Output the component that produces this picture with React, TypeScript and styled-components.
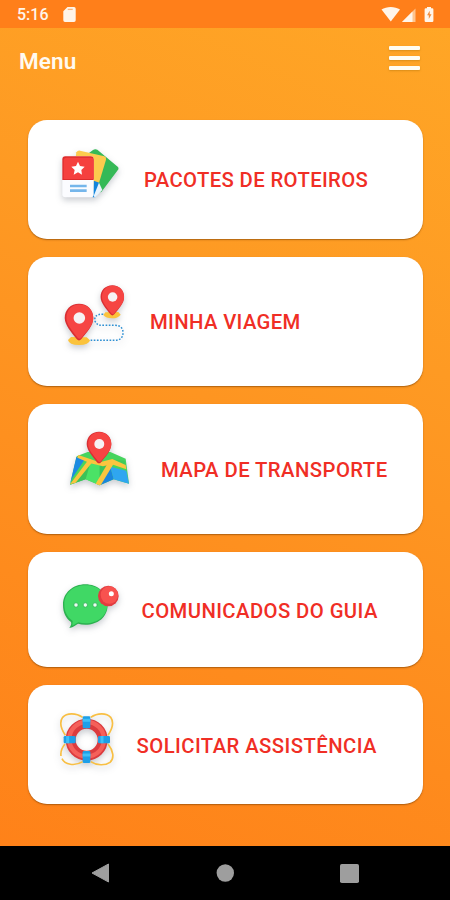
import React from "react";
import styled, { createGlobalStyle } from "styled-components";

const GlobalStyle = createGlobalStyle`
  * { box-sizing: border-box; }
  body { margin: 0; font-family: Roboto, "Liberation Sans", sans-serif; }
`;

const Screen = styled.div`
  width: 450px;
  height: 900px;
  display: flex;
  flex-direction: column;
  overflow: hidden;
  background: linear-gradient(205deg, #ffa726 0%, #fe9a23 34%, #fe8b1d 70%, #ff8018 100%);
`;

const StatusBar = styled.div`
  height: 28px;
  flex: none;
  display: flex;
  align-items: center;
  justify-content: space-between;
  padding: 1px 16px 0 17px;
  background: #ff7f1a;
  color: #fff5ea;
`;

const StatusGroup = styled.div`
  display: flex;
  align-items: center;
`;

const Clock = styled.span`
  width: 46px;
  padding-top: 1px;
  font-size: 16px;
  line-height: 20px;
  font-weight: 500;
`;

const Header = styled.header`
  height: 92px;
  flex: none;
  display: flex;
  align-items: flex-start;
  justify-content: space-between;
  padding: 17px 30px 0 19px;
`;

const Title = styled.h1`
  margin: 2px 0 0;
  font-size: 22.5px;
  line-height: 28px;
  font-weight: 600;
  letter-spacing: 0.1px;
  color: #fffaf0;
`;

const MenuButton = styled.button`
  width: 31px;
  margin: 0;
  padding: 1px 0 0;
  border: 0;
  background: none;
  display: flex;
  flex-direction: column;
  gap: 6px;
`;

const MenuBar = styled.span`
  height: 4px;
  border-radius: 1px;
  background: #fffdf2;
  box-shadow: 0 1px 2px rgba(150, 100, 0, 0.35);
`;

const CardList = styled.main`
  flex: 1;
  display: flex;
  flex-direction: column;
  gap: 18px;
  padding: 0 27px 0 28px;
`;

const Card = styled.div<{ $height: number; $inset: number }>`
  height: ${(p) => p.$height}px;
  flex: none;
  display: flex;
  align-items: center;
  padding-left: ${(p) => p.$inset}px;
  border-radius: 19px;
  background: #fff;
  box-shadow: 0 1px 1.5px rgba(120, 60, 0, 0.6);
`;

const IconSlot = styled.div<{ $gap: number; $lift: number }>`
  display: flex;
  flex: none;
  margin: 0 ${(p) => p.$gap}px ${(p) => p.$lift}px 0;
`;

const Label = styled.span<{ $spacing: number; $drop: number }>`
  padding-top: ${(p) => p.$drop}px;
  font-size: 20.3px;
  line-height: 24px;
  font-weight: 500;
  letter-spacing: ${(p) => p.$spacing}px;
  white-space: nowrap;
  color: #f02e25;
`;

const NavBar = styled.nav`
  height: 54px;
  flex: none;
  display: flex;
  align-items: center;
  justify-content: space-between;
  padding: 0 91px 0 91px;
  background: #000;
`;

const SoftSvg = styled.svg`
  overflow: visible;
  filter: drop-shadow(0 3px 3px rgba(40, 50, 70, 0.25));
`;

const SdCard = () => (
  <svg width="13" height="15" viewBox="0 0 13 15">
    <path d="M4.500 0H11a1.700 1.700 0 0 1 1.700 1.700v11.600A1.700 1.700 0 0 1 11 15H2a1.700 1.700 0 0 1-1.700-1.700V4.300z" fill="#fff5ea" />
    <path d="M4.700 2.400h5" stroke="#f9b47c" strokeWidth="1.300" />
  </svg>
);

const StatusIcons = () => (
  <svg width="53" height="17" viewBox="0 0 53 17">
    <path d="M.5 3.500C5.500 .1 14 .1 19 3.500L9.800 15.500z" fill="#fff5ea" />
    <path d="M34.500 2.500V16H21z" fill="#ffc48d" />
    <path d="M31.500 5.500V16H21z" fill="#fff5ea" />
    <path d="M46 1h4v1.300h1.200a1.200 1.200 0 0 1 1.200 1.200v11.300a1.200 1.200 0 0 1-1.200 1.200h-6.400a1.200 1.200 0 0 1-1.200-1.200V3.500a1.200 1.200 0 0 1 1.200-1.200H46z" fill="#fff5ea" />
    <path d="M48.700 4.800l-2.600 4.400h1.700v3.700l2.700-4.600h-1.800z" fill="#f28b3a" />
  </svg>
);

const PackagesIcon = () => (
  <SoftSvg width="80" height="70" viewBox="0 0 240 210">
    <path d="M128 31q7-6 14-2l61 51q5 5 0 11l-49 65-38 8V40z" fill="#35b957" />
    <path d="M79 37q4-6 11-5l73 17q7 3 5 10l-24 80-24 22L76 60z" fill="#fccb4e" />
    <path d="M131 122l17 6-4 15 10 5-18 24h-8z" fill="#1385dc" />
    <path d="M147 128l10 22-22 23-4-5z" fill="#e8f3fc" />
    <rect x="37" y="49" width="94" height="123" rx="9" fill="#fbfcff" />
    <path d="M46 49h76q9 0 9 9v62H37V58q0-9 9-9z" fill="#dc2c2c" />
    <path d="M49 53h74q8 0 8 8v56H41V61q0-8 8-8z" fill="#f5403e" />
    <path d="M84 65l6 13 14 2-10 10 2 14-12-7-13 7 3-14-10-10 14-2z" fill="#fff" />
    <path d="M60 138h50M60 152h50" stroke="#75b6eb" strokeWidth="8" />
  </SoftSvg>
);

const Pin = ({ transform }: { transform: string }) => (
  <g transform={transform}>
    <path d="M0-42C-25-42-42-24-42 0c0 21 20 42 35 62q7 8 14 0C23 42 42 23 42 0 42-24 25-42 0-42z" fill="#d92f33" />
    <path d="M2-40C-22-40-37-23-37 0c0 20 18 38 33 58q6 6 11 0C22 40 42 22 42 0 42-23 25-40 2-40z" fill="#f64543" />
    <circle cx="1" cy="0" r="17" fill="#f6f2f4" />
  </g>
);

const TripIcon = () => (
  <SoftSvg width="85" height="80" viewBox="0 0 255 240">
    <path d="M160 118C139 116 132 126 135 138C141 153 153 151 166 151H194C212 151 219 160 219 173C219 188 210 196 196 196H122" fill="none" stroke="#2f90d3" strokeWidth="4.500" strokeDasharray="5 4.500" />
    <path d="M166 112l-6 8q8 10 26 10t26-11l-7-8z" fill="#fbc33c" />
    <Pin transform="translate(187 66) scale(.84)" />
    <path d="M63 186l-9 9q3 15 33 15t33-14l-10-9z" fill="#fbc33c" />
    <Pin transform="translate(87 129) scale(1.020)" />
  </SoftSvg>
);

const MapIcon = () => (
  <SoftSvg width="85" height="80" viewBox="0 0 255 240">
    <path d="M65 109l33-13h68l46 20 10 75-46-13-42 18-42-18-47 16z" fill="#46d45e" />
    <path d="M64 111l26 6-38 57-7 18z" fill="#1b8ae2" />
    <path d="M92 178l-47 16 6-10 52-62 2 26z" fill="#3cc258" />
    <path d="M92 178l14-50 28 8v60z" fill="#4be266" />
    <path d="M134 196v-12l30-52 12 46z" fill="#1b86dc" />
    <path d="M134 138l28-10-28 58z" fill="#3bc35a" />
    <path d="M176 178l-10-38 48 12 8 39z" fill="#2fa6f0" />
    <path d="M165 118l44 4 3 14-40-10z" fill="#3fca5a" />
    <path d="M70 105l42 14 22 8 38-10 40 18 2 13-44-15-26 6-38-9-39-17z" fill="#fbc53f" />
    <path d="M45 193l57-76 13 6-53 65z" fill="#fbc53f" />
    <path d="M122 191l38-64 15 6-37 61-5 2z" fill="#fbc53f" />
    <Pin transform="translate(132 72) scale(.88)" />
  </SoftSvg>
);

const MessageIcon = () => (
  <SoftSvg width="80" height="70" viewBox="0 0 240 210">
    <path d="M106 43c37 0 67 25 67 61 0 37-29 60-67 60-8 0-15-1-22-3-6 3-13 10-26 13 5-7 7-13 5-18-16-12-24-29-24-52 0-36 30-61 67-61z" fill="#2cb150" />
    <path d="M107 46c36 0 65 23 65 57s-28 57-65 57c-8 0-15-1-22-3l-18 10 1-14c-17-12-25-28-25-50 0-34 28-57 64-57z" fill="#40d865" />
    <g fill="#e9fdf0" stroke="#2ba650" strokeWidth="2">
      <circle cx="78" cy="105" r="6.500" />
      <circle cx="106" cy="105" r="6.500" />
      <circle cx="135" cy="105" r="6.500" />
    </g>
    <circle cx="175" cy="78" r="31" fill="#e23c40" />
    <circle cx="178" cy="75" r="26" fill="#f8524f" />
    <circle cx="184" cy="71" r="7.500" fill="#fff" />
  </SoftSvg>
);

const AssistanceIcon = () => (
  <SoftSvg width="75" height="80" viewBox="0 0 225 240">
    <path d="M98 52C78 38 50 38 38 52C28 66 34 88 46 106M122 52C142 38 170 38 182 52C192 66 186 88 174 106M45 132C35 144 31 154 33 168M36 176C44 194 74 200 98 185M174 132C190 152 194 174 180 187C166 197 140 197 122 185" fill="none" stroke="#f8bf43" strokeWidth="5" />
    <circle cx="110" cy="119" r="48" fill="none" stroke="#dc3b3e" strokeWidth="30" />
    <circle cx="110" cy="118" r="52" fill="none" stroke="#f5605a" strokeWidth="13" />
    <g fill="#1d9fe8">
      <rect x="98" y="49" width="23" height="36" rx="4" />
      <rect x="98" y="153" width="23" height="36" rx="4" />
      <rect x="41" y="108" width="36" height="22" rx="4" />
      <rect x="144" y="108" width="36" height="22" rx="4" />
    </g>
    <path d="M98 61h23M98 165h23M53 108v22M156 108v22" stroke="#3fc0f7" strokeWidth="9" />
  </SoftSvg>
);

const items = [
  { label: "PACOTES DE ROTEIROS", icon: <PackagesIcon />, height: 119, inset: 22, gap: 14, lift: 9, spacing: 0.37, drop: 1 },
  { label: "MINHA VIAGEM", icon: <TripIcon />, height: 129, inset: 22, gap: 15, lift: 13, spacing: 0.37, drop: 1 },
  { label: "MAPA DE TRANSPORTE", icon: <MapIcon />, height: 130, inset: 27, gap: 21, lift: 18, spacing: 0.44, drop: 2 },
  { label: "COMUNICADOS DO GUIA", icon: <MessageIcon />, height: 115, inset: 22, gap: 11.5, lift: 9, spacing: 0.42, drop: 2 },
  { label: "SOLICITAR ASSISTÊNCIA", icon: <AssistanceIcon />, height: 119, inset: 22, gap: 11.5, lift: 9, spacing: 0.44, drop: 2 },
];

export default function App() {
  return (
    <>
      <GlobalStyle />
      <Screen>
        <StatusBar>
          <StatusGroup>
            <Clock>5:16</Clock>
            <SdCard />
          </StatusGroup>
          <StatusIcons />
        </StatusBar>
        <Header>
          <Title>Menu</Title>
          <MenuButton aria-label="Menu">
            <MenuBar />
            <MenuBar />
            <MenuBar />
          </MenuButton>
        </Header>
        <CardList>
          {items.map((item) => (
            <Card key={item.label} $height={item.height} $inset={item.inset}>
              <IconSlot $gap={item.gap} $lift={item.lift}>{item.icon}</IconSlot>
              <Label $spacing={item.spacing} $drop={item.drop}>{item.label}</Label>
            </Card>
          ))}
        </CardList>
        <NavBar>
          <svg width="19" height="20" viewBox="0 0 19 20">
            <path d="M17.500 1v18L1 10z" fill="#9e9e9e" stroke="#9e9e9e" strokeLinejoin="round" />
          </svg>
          <svg width="18" height="18" viewBox="0 0 18 18">
            <circle cx="9.300" cy="9" r="8.700" fill="#9e9e9e" />
          </svg>
          <svg width="19" height="19" viewBox="0 0 19 19">
            <rect width="19" height="19" rx="1.800" fill="#9e9e9e" />
          </svg>
        </NavBar>
      </Screen>
    </>
  );
}
